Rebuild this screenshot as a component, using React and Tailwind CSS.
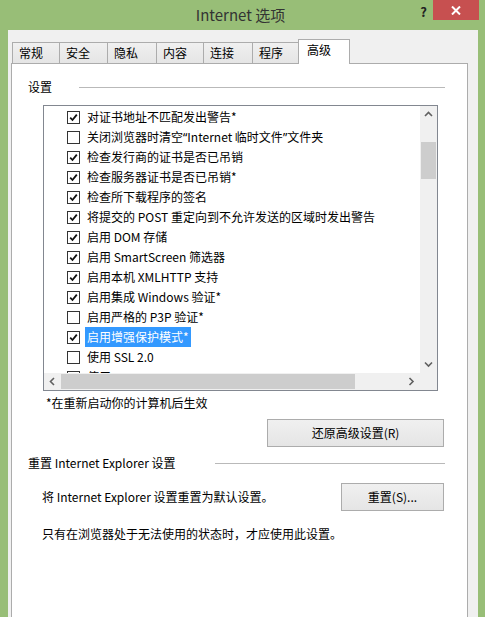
import React from 'react'

const FONT = { fontFamily: '"Noto Sans CJK SC", "Noto Sans", sans-serif' }

const tabs = [
  { label: '常规', w: 'w-[48px]' },
  { label: '安全', w: 'w-[49px]' },
  { label: '隐私', w: 'w-[50px]' },
  { label: '内容', w: 'w-[48px]' },
  { label: '连接', w: 'w-[50px]' },
  { label: '程序', w: 'w-[47px]' },
]

const Q = ({ children }) => <span style={{ fontFamily: '"Noto Sans", sans-serif' }}>{children}</span>

const items = [
  { text: '对证书地址不匹配发出警告*', on: true },
  {
    text: (
      <>
        关闭浏览器时清空<Q>“</Q>Internet 临时文件<Q>”</Q>文件夹
      </>
    ),
    on: false,
  },
  { text: '检查发行商的证书是否已吊销', on: true },
  { text: '检查服务器证书是否已吊销*', on: true },
  { text: '检查所下载程序的签名', on: true },
  { text: '将提交的 POST 重定向到不允许发送的区域时发出警告', on: true },
  { text: '启用 DOM 存储', on: true },
  { text: '启用 SmartScreen 筛选器', on: true },
  { text: '启用本机 XMLHTTP 支持', on: true },
  { text: '启用集成 Windows 验证*', on: true },
  { text: '启用严格的 P3P 验证*', on: false },
  { text: '启用增强保护模式*', on: true, selected: true },
  { text: '使用 SSL 2.0', on: false },
  { text: '使用 SSL 3.0', on: true },
]

const CheckBox = ({ on }) => (
  <span className="flex h-[13px] w-[13px] shrink-0 items-center justify-center border border-[#333333] bg-white">
    {on && (
      <svg width="9" height="9" viewBox="0 0 9 9">
        <path d="M1.2 4.6 L3.5 7 L7.8 1.6" fill="none" stroke="#111" strokeWidth="1.8" />
      </svg>
    )}
  </span>
)

const Chevron = ({ dir }) => {
  const d = {
    up: 'M1 5 L4.5 1.5 L8 5',
    down: 'M1 1.5 L4.5 5 L8 1.5',
    left: 'M5 1 L1.5 4.5 L5 8',
    right: 'M1.5 1 L5 4.5 L1.5 8',
  }[dir]
  const vert = dir === 'up' || dir === 'down'
  return (
    <svg width={vert ? 9 : 7} height={vert ? 7 : 9} viewBox={vert ? '0 0 9 7' : '0 0 7 9'}>
      <path d={d} fill="none" stroke="#606060" strokeWidth="1.6" />
    </svg>
  )
}

const Button = ({ children, w }) => (
  <button className={`${w} h-[28px] border border-[#acacac] bg-gradient-to-b from-[#f0f0f0] to-[#e5e5e5] text-[12px] text-black`}>
    {children}
  </button>
)

export default function App() {
  return (
    <div className="flex h-[617px] w-[485px] flex-col overflow-hidden bg-[#98be77] text-black" style={FONT}>
      <div className="flex h-[30px] shrink-0 items-start">
        <div className="w-[73px]" />
        <div className="flex-1 pt-[4px] pr-[4px] text-center text-[15px] text-[#333333]">Internet 选项</div>
        <div className="flex w-[73px] items-start">
          <span className="mt-[2px] w-[21px] pl-[2px] text-center text-[13px] font-bold text-[#222]">?</span>
          <span className="flex h-[20px] w-[46px] items-center justify-center bg-[#c75050]">
            <svg width="10" height="9" viewBox="0 0 10 9">
              <path d="M1 0.5 L9 8.5 M9 0.5 L1 8.5" stroke="#fff" strokeWidth="2" />
            </svg>
          </span>
        </div>
      </div>

      <div className="ml-[8px] mr-[7px] flex flex-1 flex-col bg-[#f0f0f0] pt-[9px]">
        <div className="flex items-end pl-[4px]">
          {tabs.map((t, i) => (
            <div
              key={t.label}
              className={`${t.w} ${i > 0 ? '-ml-px' : ''} h-[21px] border border-b-0 border-[#acacac] bg-gradient-to-b from-[#f0f0f0] to-[#e5e5e5] pl-[6px] pt-[2px] text-[12px] leading-[16px]`}
            >
              {t.label}
            </div>
          ))}
          <div className="relative z-10 -mb-px -ml-px h-[25px] w-[52px] border border-b-0 border-[#acacac] bg-white pl-[8px] pt-[2px] text-[12px] leading-[16px]">
            高级
          </div>
        </div>

        <div className="ml-[3px] mr-[10px] flex flex-1 flex-col border border-b-0 border-[#acacac] bg-white text-[12px]">
          <div className="mt-[16px] flex h-[14px] items-center leading-[14px]">
            <span className="pl-[16px]">设置</span>
            <span className="ml-[27px] h-px w-[366px] bg-[#b9b9b9]" />
          </div>

          <div className="ml-[31px] mt-[11px] flex h-[286px] w-[395px] flex-col border border-[#828790]">
            <div className="flex h-[267px]">
              <div className="flex-1 overflow-hidden pt-[1px]">
                {items.map((it, i) => (
                  <div key={i} className="flex h-[20px] items-center whitespace-nowrap pl-[23px]">
                    <CheckBox on={it.on} />
                    <span
                      className={`ml-[5px] px-[2px] leading-[20px] ${it.selected ? 'bg-[#3399ff] text-white' : ''}`}
                    >
                      {it.text}
                    </span>
                  </div>
                ))}
              </div>
              <div className="flex w-[17px] flex-col bg-[#f0f0f0]">
                <div className="flex h-[17px] items-center justify-center">
                  <Chevron dir="up" />
                </div>
                <div className="mx-px mt-[19px] h-[37px] bg-[#cdcdcd]" />
                <div className="flex-1" />
                <div className="flex h-[17px] items-center justify-center">
                  <Chevron dir="down" />
                </div>
              </div>
            </div>
            <div className="flex h-[17px] bg-[#f0f0f0]">
              <div className="flex w-[17px] items-center justify-center">
                <Chevron dir="left" />
              </div>
              <div className="my-px h-[15px] w-[294px] bg-[#cdcdcd]" />
              <div className="flex-1" />
              <div className="flex w-[17px] items-center justify-center">
                <Chevron dir="right" />
              </div>
              <div className="w-[17px]" />
            </div>
          </div>

          <div className="mt-[5px] pl-[34px] leading-[14px]">*在重新启动你的计算机后生效</div>

          <div className="mr-[23px] mt-[9px] flex justify-end">
            <Button w="w-[177px]">还原高级设置(R)</Button>
          </div>

          <div className="mt-[9px] flex h-[14px] items-center justify-between pr-[22px] leading-[14px]">
            <span className="pl-[16px]">重置 Internet Explorer 设置</span>
            <span className="h-px w-[230px] bg-[#b9b9b9]" />
          </div>

          <div className="mr-[23px] mt-[13px] flex h-[28px] items-center justify-between pl-[30px]">
            <span>将 Internet Explorer 设置重置为默认设置。</span>
            <Button w="w-[103px]">重置(S)...</Button>
          </div>

          <div className="mt-[16px] pl-[30px] leading-[14px]">只有在浏览器处于无法使用的状态时，才应使用此设置。</div>
        </div>
      </div>
    </div>
  )
}
